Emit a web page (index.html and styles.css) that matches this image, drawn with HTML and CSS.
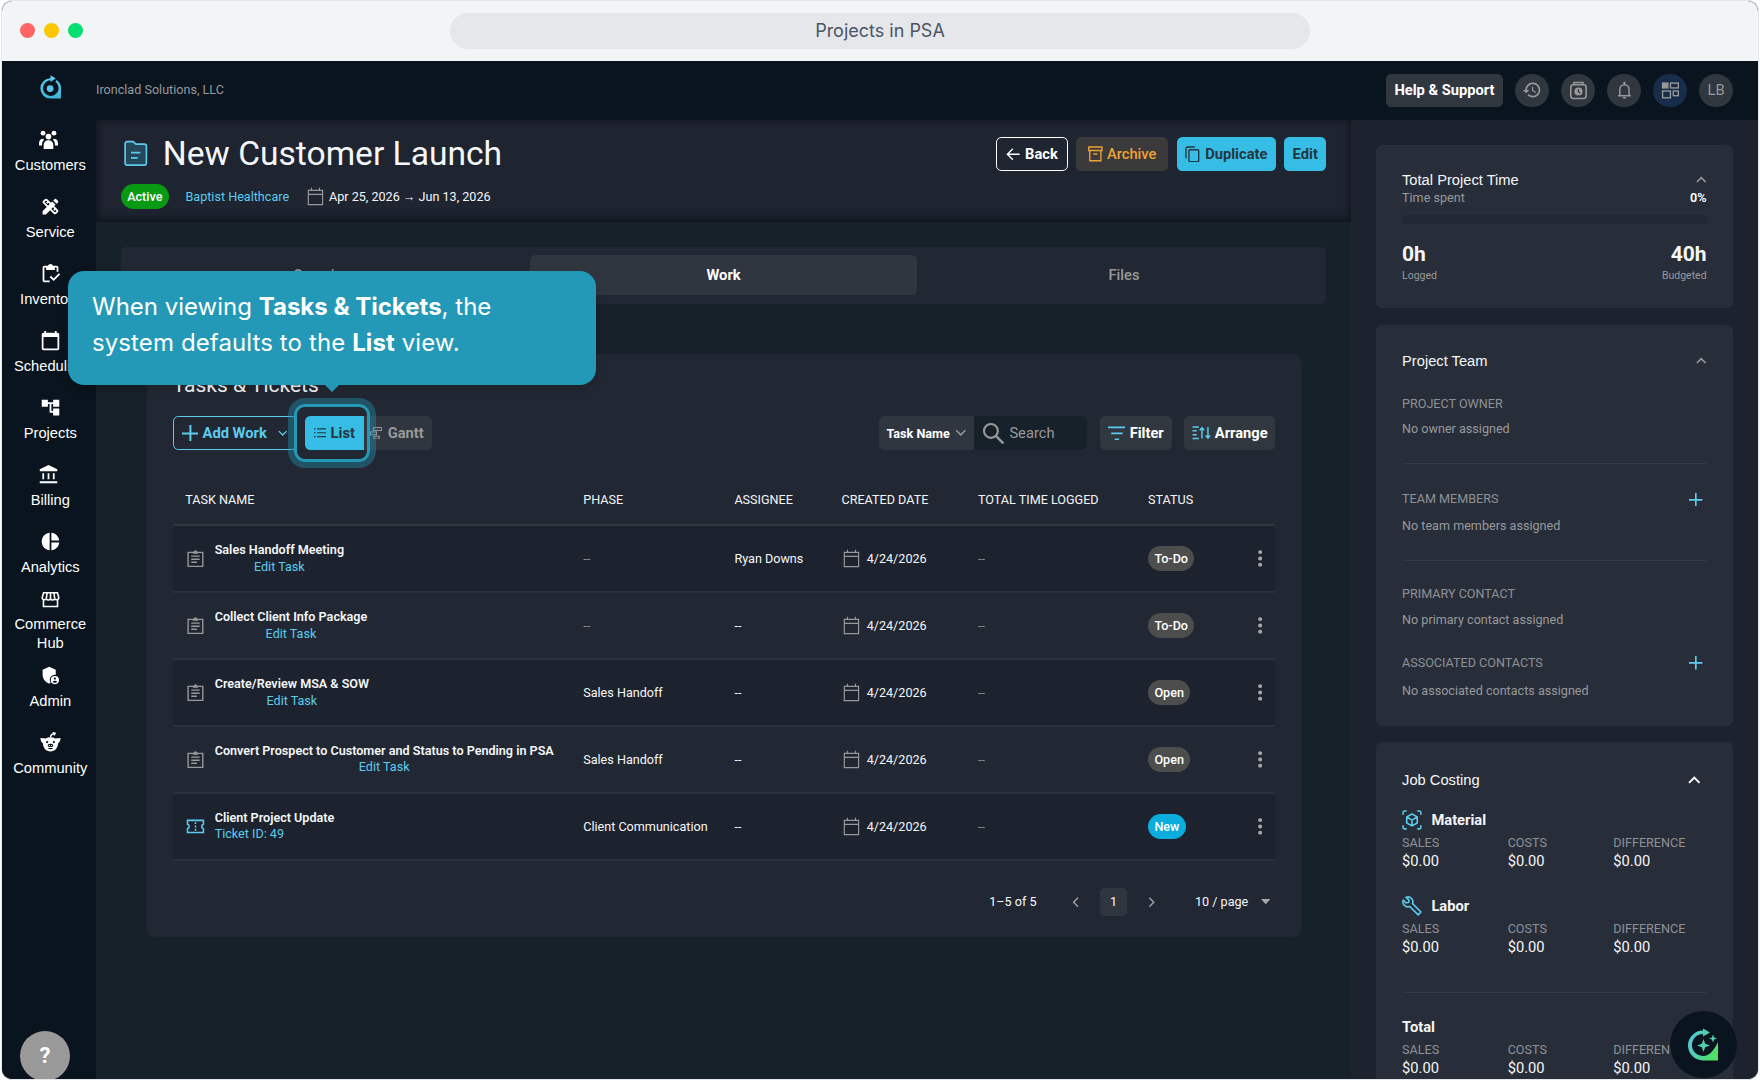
FILE: index.html
```html
<!DOCTYPE html>
<html lang="en">
<head>
  <meta charset="UTF-8">
  <meta name="viewport" content="width=device-width, initial-scale=1.0">
  <title>Projects in PSA</title>
  <link rel="stylesheet" href="styles.css">
</head>
<body>
  <!-- Shared icons -->
  <svg class="sprite" width="0" height="0">
    <symbol id="i-calendar" viewBox="0 0 18 18">
      <path d="M2.2 3.2h13.6v13.6H2.2zM2.2 7h13.6M5.2.6v2.6M12.8.6v2.6" fill="none" stroke="currentColor" stroke-width="1.1"/>
    </symbol>
    <symbol id="i-task" viewBox="0 0 18 18">
      <path d="M2 3.2h14v13.4H2z" fill="none" stroke="currentColor" stroke-width="1.3"/>
      <path d="M6.5 2.6h1a1.5 1.5 0 0 1 3 0h1v2h-5zM5 6.2h8v1.3H5zM5 9.1h8v1.3H5zM5 12h5.4v1.3H5z" fill="currentColor"/>
    </symbol>
    <symbol id="i-ticket" viewBox="0 0 18 18">
      <path d="M1.4 3.2h15.2v3.6a2.3 2.3 0 0 0 0 4.4v3.6H1.4v-3.6a2.3 2.3 0 0 0 0-4.4z" fill="none" stroke="currentColor" stroke-width="1.5"/>
      <path d="M8.3 5h1.5v1.7H8.3zM8.3 8.1h1.5v1.8H8.3zM8.3 11.3h1.5V13H8.3z" fill="currentColor"/>
    </symbol>
    <symbol id="i-dots" viewBox="0 0 4 16">
      <circle cx="2" cy="2" r="1.9"/><circle cx="2" cy="8" r="1.9"/><circle cx="2" cy="14" r="1.9"/>
    </symbol>
    <symbol id="i-up" viewBox="0 0 12 8">
      <path d="M1 6.6l5-5 5 5" fill="none" stroke="currentColor" stroke-width="1.8"/>
    </symbol>
    <symbol id="i-down" viewBox="0 0 12 8">
      <path d="M1 1.4l5 5 5-5" fill="none" stroke="currentColor" stroke-width="1.6"/>
    </symbol>
    <symbol id="i-plus" viewBox="0 0 14 14">
      <path d="M7 0v14M0 7h14" fill="none" stroke="currentColor" stroke-width="1.7"/>
    </symbol>
  </svg>

  <div class="window">
    <div class="titlebar">
      <div class="lights"><i class="red"></i><i class="yellow"></i><i class="green"></i></div>
      <div class="address">Projects in PSA</div>
    </div>

    <div class="app">
      <header class="topbar">
        <div class="logo">
          <svg width="22" height="24" viewBox="0 0 22 24"><defs><linearGradient id="lg" x2="0" y2="1"><stop offset="0" stop-color="#5fd0f2"/><stop offset="1" stop-color="#3fb2d8"/></linearGradient></defs><path d="M11 3.100A9.700 9.700 0 1 0 11 22.500h10V13a9.600 9.600 0 0 0-4.300-8.200l-1.100 1.700A7.400 7.400 0 1 1 11 5.100v1.500l5-3.300L11 .2z" fill="url(#lg)"/><circle cx="10.600" cy="12.900" r="3.200" fill="#55c8ec"/></svg>
        </div>
        <span class="company">Ironclad Solutions, LLC</span>
        <div class="top-actions">
          <button class="btn grey">Help &amp; Support</button>
          <span class="circle"><svg width="19" height="19" viewBox="0 0 24 24" fill="currentColor"><path d="M13 3c-4.970 0-9 4.030-9 9H1l4 4 4-4H6c0-3.870 3.130-7 7-7s7 3.130 7 7-3.130 7-7 7c-1.930 0-3.680-.79-4.940-2.060l-1.420 1.420C8.270 19.990 10.510 21 13 21c4.970 0 9-4.030 9-9s-4.030-9-9-9zm-1 5v5l4.280 2.540.72-1.210-3.500-2.080V8z"/></svg></span>
          <span class="circle"><svg width="18" height="18" viewBox="0 0 18 18" fill="none" stroke="currentColor" stroke-width="1.500"><path d="M4 1.400h10M4.800 1v2.500M13.200 1v2.500"/><rect x="1.700" y="3.600" width="14.600" height="13" rx="2.500"/><circle cx="9" cy="10" r="3.900" fill="currentColor" stroke="none"/><path d="M9 7.800v2.400l1.400 1.200" stroke="#30373f" stroke-width="1.200"/></svg></span>
          <span class="circle"><svg width="18" height="18" viewBox="0 0 18 18" fill="none" stroke="currentColor" stroke-width="1.400"><path d="M2.800 14h12.400M4.600 14V8a4.400 4.400 0 0 1 8.800 0v6"/><path d="M9 .8v2.400" stroke-width="2"/><path d="M7.300 15.300h3.400a1.700 1.700 0 0 1-3.400 0z" fill="currentColor" stroke="none"/></svg></span>
          <span class="circle apps"><svg width="18" height="18" viewBox="0 0 18 18" fill="none" stroke="currentColor" stroke-width="1.300"><rect x="1.500" y="2" width="5" height="4.600" fill="currentColor"/><rect x="9" y="2" width="7.500" height="4.600"/><rect x="1.500" y="9.500" width="7.500" height="6.500"/><rect x="11.700" y="9.500" width="4.800" height="4.500"/></svg></span>
          <span class="circle">LB</span>
        </div>
      </header>

      <div class="body">
        <nav class="sidebar">
          <a class="nav-item"><svg class="shift" width="20" height="20" viewBox="0 0 20 20" fill="currentColor"><circle cx="4.800" cy="4" r="2.300"/><circle cx="15.200" cy="4" r="2.300"/><circle cx="10" cy="7.200" r="2.700"/><path d="M5.400 15.200a4.600 4.600 0 0 1 9.200 0V19H5.400zM5 9.300A4.200 4.200 0 0 0 1 13v2.800h2.800c0-2.400.3-4.200 1.900-5.400zM15 9.300a4.200 4.200 0 0 1 4 3.700v2.800h-2.800c0-2.400-.3-4.200-1.900-5.400z"/></svg>Customers</a>
          <a class="nav-item"><svg width="20" height="20" viewBox="0 0 24 24" fill="currentColor"><path d="M16.240 11.510l1.570-1.570-3.750-3.750-1.570 1.570-4.140-4.130c-.78-.78-2.050-.78-2.830 0l-1.900 1.900c-.78.78-.78 2.050 0 2.830l4.130 4.130L3 17.250V21h3.750l4.760-4.760 4.130 4.130c.95.95 2.230.6 2.830 0l1.900-1.900c.78-.78.78-2.050 0-2.830l-4.130-4.130zM9.180 11.070L5.040 6.940l1.890-1.900 1.270 1.270-1.190 1.190 1.410 1.410 1.190-1.190 1.450 1.450zm7.880 7.890l-4.130-4.130 1.900-1.900 1.450 1.450-1.190 1.190 1.410 1.410 1.190-1.190 1.270 1.270zM20.710 7.040c.39-.39.39-1.020 0-1.410l-2.340-2.340c-.47-.47-1.120-.29-1.410 0l-1.830 1.830 3.750 3.750z"/></svg>Service</a>
          <a class="nav-item"><svg width="20" height="20" viewBox="0 0 24 24" fill="currentColor"><path d="M5 5h2v3h10V5h2v5h2V5c0-1.100-.9-2-2-2h-4.180C14.400 1.840 13.300 1 12 1s-2.400.84-2.820 2H5c-1.100 0-2 .9-2 2v15c0 1.100.9 2 2 2h6v-2H5z"/><path d="M21.500 11.700l-5.900 6-3-3-1.500 1.500 4.500 4.500 7.400-7.500z"/></svg>Inventory</a>
          <a class="nav-item"><svg width="20" height="20" viewBox="0 0 24 24" fill="currentColor"><path d="M20 3h-1V1h-2v2H7V1H5v2H4c-1.100 0-2 .9-2 2v16c0 1.100.9 2 2 2h16c1.100 0 2-.9 2-2V5c0-1.100-.9-2-2-2zm0 18H4V8h16v13z"/></svg>Scheduling</a>
          <a class="nav-item"><svg width="20" height="20" viewBox="0 0 24 24" fill="currentColor"><path d="M22 11V3h-7v3H9V3H2v8h7V8h2v10h4v3h7v-8h-7v3h-2V8h2v3z"/></svg>Projects</a>
          <a class="nav-item"><svg class="shift" width="20" height="20" viewBox="0 0 24 24" fill="currentColor"><path d="M12 1L2 6v2.200h20V6zM5 10.500h2v7H5zM11 10.500h2v7h-2zM17 10.500h2v7h-2zM2 19.700h20V22H2z"/></svg>Billing</a>
          <a class="nav-item"><svg width="20" height="20" viewBox="0 0 24 24" fill="currentColor"><path d="M11 2v20c-5.070-.5-9-4.790-9-10s3.930-9.500 9-10zm2.030 0v8.990H22c-.47-4.740-4.240-8.520-8.970-8.990zm0 11.010V22c4.740-.47 8.500-4.250 8.970-8.990z"/></svg>Analytics</a>
          <a class="nav-item"><svg width="20" height="20" viewBox="0 0 20 20" fill="none" stroke="currentColor" stroke-width="1.500"><path d="M3.400 3.500h13.200l1.400 5a2.200 2.200 0 0 1-4 .8 2.300 2.300 0 0 1-4 0 2.300 2.300 0 0 1-4 0 2.200 2.200 0 0 1-4-.8zM6.800 3.500L6 9M10 3.500V9M13.200 3.500L14 9M3.300 10.500v6.200h13.400v-6.200"/></svg><span>Commerce<br>Hub</span></a>
          <a class="nav-item"><svg width="20" height="20" viewBox="0 0 24 24" fill="currentColor"><path d="M17 11c.34 0 .67.04 1 .09V5.500L10.500 2 3 5.500v5.680c0 4.540 3.200 8.790 7.500 9.820.55-.13 1.080-.32 1.600-.55A6 6 0 0 1 17 11z"/><path d="M17 12.500a4.700 4.700 0 1 0 0 9.400 4.700 4.700 0 0 0 0-9.400zm0 1.700a1.300 1.300 0 1 1 0 2.600 1.300 1.300 0 0 1 0-2.600zm0 6.200c-1 0-1.900-.5-2.400-1.300.1-.8 1.600-1.200 2.400-1.200s2.300.4 2.400 1.200c-.5.8-1.400 1.300-2.400 1.300z"/></svg>Admin</a>
          <a class="nav-item"><svg width="20" height="20" viewBox="0 0 20 20"><path d="M10 5c1.700 0 3.200.4 4.500 1.200L19.500 5.800c.2 2-.6 3.800-2.200 5C17 15.500 14 18.600 10 18.600S3 15.500 2.700 10.800C1.100 9.600.3 7.800.5 5.800l5 .4C6.800 5.400 8.300 5 10 5z" fill="currentColor"/><path d="M10 5c.2-2 1.400-3.400 3.800-3.600M12.300.3l2.200 1-1.300 2" fill="none" stroke="currentColor" stroke-width="1.300"/><g fill="#09141e"><circle cx="6.800" cy="9.600" r="1.100"/><circle cx="13.200" cy="9.600" r="1.100"/><path d="M7.300 12.500a2.800 1.700 0 0 1 5.400 0c0 1.300-1.100 1.700-2.700 1.700s-2.700-.4-2.700-1.700zM7.600 15.300h4.800a2.500 1.600 0 0 1-4.800 0z"/></g><path d="M8.600 12.300h.9v1.100h-.9zM10.600 12.300h.9v1.100h-.9z" fill="currentColor"/></svg>Community</a>
        </nav>

        <main class="main">
          <section class="project-head">
            <div class="head-row">
              <svg width="28" height="28" viewBox="0 0 28 28"><path d="M3.900 4.500a2 2 0 0 1 2-2h5.600l2.700 2.400h8a2 2 0 0 1 2 2v16a2 2 0 0 1-2 2H5.900a2 2 0 0 1-2-2z" fill="#25475a" stroke="#5ccbee" stroke-width="1.600"/><path d="M9.500 13h9M9.500 18h6.400" stroke="#5ccbee" stroke-width="1.600"/></svg>
              <h1>New Customer Launch</h1>
              <div class="head-actions">
                <button class="btn outline"><svg width="13" height="12" viewBox="0 0 13 12"><path d="M6.500.8L1.300 6l5.200 5.200M1.500 6H13" fill="none" stroke="currentColor" stroke-width="1.300"/></svg>Back</button>
                <button class="btn archive"><svg width="14" height="15" viewBox="0 0 14 15" fill="none" stroke="currentColor" stroke-width="1.300"><path d="M.7.900h12.600v3.400H.7zM1.700 4.300v9.800h10.600V4.300M5 7.600h4"/></svg>Archive</button>
                <button class="btn cyan"><svg width="14" height="16" viewBox="0 0 15 17" fill="none" stroke="currentColor" stroke-width="1.400"><path d="M1 12.500V2.300C1 1.500 1.500 1 2.300 1H10"/><rect x="4" y="3.800" width="10" height="12.200" rx="1.200"/></svg>Duplicate</button>
                <button class="btn cyan">Edit</button>
              </div>
            </div>
            <div class="meta-row">
              <span class="badge active">Active</span>
              <a class="link">Baptist Healthcare</a>
              <span class="dates"><svg class="muted" width="18" height="18"><use href="#i-calendar"/></svg>Apr 25, 2026 → Jun 13, 2026</span>
            </div>
          </section>

          <section class="content">
            <div class="tabs">
              <div class="tab">Overview</div>
              <div class="tab selected">Work</div>
              <div class="tab">Files</div>
            </div>

            <div class="work-card">
              <h2>Tasks &amp; Tickets</h2>
              <div class="toolbar">
                <button class="btn add-work"><svg width="16" height="16"><use href="#i-plus"/></svg>Add Work<svg class="caret" width="9" height="6"><use href="#i-down"/></svg></button>
                <div class="view-switch">
                  <button class="btn list"><svg width="12" height="9" viewBox="0 0 12 9"><path d="M0 .8h1.500M0 4.500h1.500M0 8.200h1.500M3 .8h9M3 4.500h9M3 8.200h9" stroke="currentColor" stroke-width="1.100"/></svg>List</button>
                  <button class="btn gantt"><svg width="12" height="12" viewBox="0 0 12 12" fill="none" stroke="currentColor" stroke-width="1"><rect x="3.200" y=".6" width="8" height="2.700"/><rect x=".6" y="4.700" width="5.600" height="2.700"/><rect x="3.800" y="8.800" width="5" height="2.600"/></svg>Gantt</button>
                </div>
                <div class="tools">
                  <div class="search-group">
                    <button class="btn field">Task Name<svg width="11" height="7"><use href="#i-down"/></svg></button>
                    <div class="search"><svg width="22" height="22" viewBox="0 0 22 22" fill="none" stroke="currentColor"><circle cx="8.500" cy="8.500" r="6.600" stroke-width="2"/><path d="M13.400 13.400l7 7" stroke-width="2.300"/></svg>Search</div>
                  </div>
                  <button class="btn grey filter"><svg width="17" height="14" viewBox="0 0 17 14"><path d="M0 1.300h17M3 7h11M6.400 12.700h4.200" stroke="#5ccbee" stroke-width="1.600"/></svg>Filter</button>
                  <button class="btn grey arrange"><svg width="18" height="13" viewBox="0 0 18 13" fill="none" stroke="#5ccbee" stroke-width="1.400"><path d="M.5 1h6M.5 4.600h4M.5 8.300h4M.5 12h6M9.500 12V1.500M7.400 4l2.100-2.500L11.600 4M15.200 1v10.500M13.100 9l2.100 2.500L17.300 9"/></svg>Arrange</button>
                </div>
              </div>

              <table class="tasks">
                <colgroup><col class="c-name"><col class="c-phase"><col class="c-assignee"><col class="c-date"><col class="c-time"><col class="c-status"></colgroup>
                <thead>
                  <tr><th>TASK NAME</th><th>PHASE</th><th>ASSIGNEE</th><th>CREATED DATE</th><th>TOTAL TIME LOGGED</th><th>STATUS</th></tr>
                </thead>
                <tbody>
                  <tr>
                    <td><div class="task"><svg width="18" height="18"><use href="#i-task"/></svg><div><b>Sales Handoff Meeting</b><a class="link">Edit Task</a></div></div></td>
                    <td class="empty">--</td><td>Ryan Downs</td>
                    <td><div class="date"><svg width="18" height="18"><use href="#i-calendar"/></svg>4/24/2026</div></td>
                    <td class="empty">--</td>
                    <td><div class="status"><span class="badge">To-Do</span><svg width="4" height="16"><use href="#i-dots"/></svg></div></td>
                  </tr>
                  <tr>
                    <td><div class="task"><svg width="18" height="18"><use href="#i-task"/></svg><div><b>Collect Client Info Package</b><a class="link">Edit Task</a></div></div></td>
                    <td class="empty">--</td><td>--</td>
                    <td><div class="date"><svg width="18" height="18"><use href="#i-calendar"/></svg>4/24/2026</div></td>
                    <td class="empty">--</td>
                    <td><div class="status"><span class="badge">To-Do</span><svg width="4" height="16"><use href="#i-dots"/></svg></div></td>
                  </tr>
                  <tr>
                    <td><div class="task"><svg width="18" height="18"><use href="#i-task"/></svg><div><b>Create/Review MSA &amp; SOW</b><a class="link">Edit Task</a></div></div></td>
                    <td>Sales Handoff</td><td>--</td>
                    <td><div class="date"><svg width="18" height="18"><use href="#i-calendar"/></svg>4/24/2026</div></td>
                    <td class="empty">--</td>
                    <td><div class="status"><span class="badge">Open</span><svg width="4" height="16"><use href="#i-dots"/></svg></div></td>
                  </tr>
                  <tr>
                    <td><div class="task"><svg width="18" height="18"><use href="#i-task"/></svg><div><b>Convert Prospect to Customer and Status to Pending in PSA</b><a class="link">Edit Task</a></div></div></td>
                    <td>Sales Handoff</td><td>--</td>
                    <td><div class="date"><svg width="18" height="18"><use href="#i-calendar"/></svg>4/24/2026</div></td>
                    <td class="empty">--</td>
                    <td><div class="status"><span class="badge">Open</span><svg width="4" height="16"><use href="#i-dots"/></svg></div></td>
                  </tr>
                  <tr>
                    <td><div class="task ticket"><svg width="18" height="18"><use href="#i-ticket"/></svg><div><b>Client Project Update</b><a class="link">Ticket ID: 49</a></div></div></td>
                    <td>Client Communication</td><td>--</td>
                    <td><div class="date"><svg width="18" height="18"><use href="#i-calendar"/></svg>4/24/2026</div></td>
                    <td class="empty">--</td>
                    <td><div class="status"><span class="badge new">New</span><svg width="4" height="16"><use href="#i-dots"/></svg></div></td>
                  </tr>
                </tbody>
              </table>

              <div class="pagination">
                <span class="range">1–5 of 5</span>
                <svg width="7" height="10" viewBox="0 0 7 10"><path d="M5.700.8L1.500 5l4.200 4.200" fill="none" stroke="currentColor" stroke-width="1.300"/></svg>
                <span class="page">1</span>
                <svg width="7" height="10" viewBox="0 0 7 10"><path d="M1.300.8L5.500 5 1.300 9.200" fill="none" stroke="currentColor" stroke-width="1.300"/></svg>
                <span class="per-page">10 / page<svg width="9" height="5" viewBox="0 0 9 5"><path d="M0 0h9L4.500 5z" fill="currentColor"/></svg></span>
              </div>
            </div>
          </section>
        </main>

        <aside class="side">
          <section class="card time-card">
            <div class="card-title">Total Project Time<svg width="10" height="7"><use href="#i-up"/></svg></div>
            <div class="between spent"><span>Time spent</span><b>0%</b></div>
            <div class="progress"></div>
            <div class="between hours"><b>0h</b><b>40h</b></div>
            <div class="between small"><span>Logged</span><span>Budgeted</span></div>
          </section>

          <section class="card team-card">
            <div class="card-title">Project Team<svg width="10" height="7"><use href="#i-up"/></svg></div>
            <div class="group owner"><div class="label">PROJECT OWNER</div><p>No owner assigned</p></div>
            <hr>
            <div class="group with-add"><div class="label">TEAM MEMBERS<svg width="13" height="13"><use href="#i-plus"/></svg></div><p>No team members assigned</p></div>
            <hr>
            <div class="group primary"><div class="label">PRIMARY CONTACT</div><p>No primary contact assigned</p></div>
            <div class="group with-add last"><div class="label">ASSOCIATED CONTACTS<svg width="13" height="13"><use href="#i-plus"/></svg></div><p>No associated contacts assigned</p></div>
          </section>

          <section class="card cost-card">
            <div class="card-title">Job Costing<svg class="bright" width="12" height="8"><use href="#i-up"/></svg></div>
            <div class="cost">
              <h3><svg width="19" height="19" viewBox="0 0 19 19" fill="none" stroke="#5ccbee" stroke-width="1.500"><path d="M1 4.500V2.500A1.500 1.500 0 0 1 2.500 1h2M14.500 1h2A1.500 1.500 0 0 1 18 2.500v2M18 14.500v2a1.500 1.500 0 0 1-1.500 1.500h-2M4.500 18h-2A1.500 1.500 0 0 1 1 16.500v-2M9.500 3.800l5 2.800v5.800l-5 2.800-5-2.800V6.600zM4.500 6.600l5 3 5-3M9.500 9.600v5.600"/></svg>Material</h3>
              <dl><div><dt>SALES</dt><dd>$0.00</dd></div><div><dt>COSTS</dt><dd>$0.00</dd></div><div><dt>DIFFERENCE</dt><dd>$0.00</dd></div></dl>
            </div>
            <div class="cost">
              <h3><svg width="19" height="19" viewBox="0 0 19 19" fill="none" stroke="#5ccbee" stroke-width="1.500"><path d="M3.800 1.300A4.600 4.600 0 0 1 10 7.200l8 8-2.600 2.700-8.100-8A4.600 4.600 0 0 1 1.200 4l2.700 2.600 2.300-.5.500-2.200z"/></svg>Labor</h3>
              <dl><div><dt>SALES</dt><dd>$0.00</dd></div><div><dt>COSTS</dt><dd>$0.00</dd></div><div><dt>DIFFERENCE</dt><dd>$0.00</dd></div></dl>
            </div>
            <hr>
            <div class="cost total">
              <h3>Total</h3>
              <dl><div><dt>SALES</dt><dd>$0.00</dd></div><div><dt>COSTS</dt><dd>$0.00</dd></div><div><dt>DIFFERENCE</dt><dd>$0.00</dd></div></dl>
            </div>
          </section>
        </aside>
      </div>
    </div>

    <!-- Floating layers -->
    <div class="help-bubble">?</div>
    <div class="assistant">
      <svg width="31" height="33" viewBox="0 0 31 33"><defs><linearGradient id="ag" y2=".5"><stop offset="0" stop-color="#55c5ea"/><stop offset=".55" stop-color="#4fd0a8"/><stop offset="1" stop-color="#4fe06a"/></linearGradient></defs><path d="M15 2.500v-2l7 4-7 4v-2.500a11 11 0 1 0 4.500 21C24.500 24.500 27 20 30 14v18.500H15a15 15 0 0 1 0-30z" fill="url(#ag)"/><path d="M15.500 11l1.700 4.800 4.800 1.700-4.800 1.700-1.700 4.800-1.700-4.800L9 17.500l4.800-1.700zM25 6.500l1.100 2.900 2.900 1.100-2.900 1.100L25 14.500l-1.100-2.900L21 10.500l2.900-1.100z" fill="#4fd0a8"/></svg>
    </div>
    <div class="highlight"></div>
    <div class="tooltip">When viewing <b>Tasks &amp; Tickets</b>, the<br><span>system defaults to the <b>List</b> view.</span></div>
  </div>
</body>
</html>
```
FILE: styles.css
```css
* {
  box-sizing: border-box;
}
body {
  margin: 0;
  background: #fff;
  font-family: Roboto, sans-serif;
  overflow: hidden;
}
svg {
  flex: none;
  display: block;
}
.sprite {
  position: absolute;
}
h1, h2, h3, p, dl, dd {
  margin: 0;
}

/* Browser window */
.window {
  position: relative;
  width: 1758px;
  height: 1080px;
  margin-left: 1px;
  border: 1px solid #e5e7eb;
  border-radius: 11px;
  overflow: hidden;
  background: #09141e;
}
.titlebar {
  display: grid;
  grid-template-columns: 448px 860px 1fr;
  align-items: center;
  height: 60px;
  background: #f3f4f6;
}
.lights {
  display: flex;
  gap: 9px;
  padding: 0 0 1px 18px;
}
.lights i {
  width: 15px;
  height: 15px;
  border-radius: 50%;
}
.red { background: #ff6467; }
.yellow { background: #fdc700; }
.green { background: #05df72; }
.address {
  height: 36px;
  line-height: 36px;
  border-radius: 18px;
  background: #e5e7eb;
  color: #4a5565;
  font-family: Inter, sans-serif;
  font-size: 18px;
  text-align: center;
}

/* App shell */
.app {
  zoom: 1.05;
  display: flex;
  flex-direction: column;
  height: 970px;
  color: #f5f6f7;
  font-size: 12px;
}
.topbar {
  display: flex;
  align-items: center;
  flex: none;
  height: 56px;
  padding-right: 24px;
  background: #09141e;
}
.logo {
  width: 89.5px;
  padding: 0 0 6px 35.5px;
}
.company {
  padding-bottom: 2px;
  color: #97999c;
}
.top-actions {
  display: flex;
  gap: 11.8px;
  margin-left: auto;
}
.circle {
  display: flex;
  align-items: center;
  justify-content: center;
  width: 32px;
  height: 32px;
  border-radius: 50%;
  background: #30373f;
  color: #999;
  font-size: 14px;
}
.circle.apps {
  background: #182c4b;
}
.body {
  display: flex;
  flex: 1;
  min-height: 0;
}

/* Buttons */
.btn {
  display: flex;
  align-items: center;
  justify-content: center;
  height: 32px;
  padding: 0 8px;
  border: 0;
  border-radius: 5px;
  font: bold 14px Roboto, sans-serif;
  white-space: nowrap;
}
.btn.grey {
  background: #30373f;
  color: #fff;
}
.btn.outline {
  gap: 5px;
  width: 68px;
  border: 1px solid #fff;
  background: none;
  color: #fff;
}
.btn.archive {
  gap: 4px;
  width: 88px;
  background: #3a3a3a;
  color: #f0a135;
  font-weight: 500;
}
.btn.cyan {
  gap: 5px;
  background: #35bde5;
  color: #26363f;
}

/* Sidebar */
.sidebar {
  flex: none;
  width: 90px;
  padding-left: 2px;
  background: #09141e;
}
.nav-item {
  display: flex;
  flex-direction: column;
  align-items: center;
  justify-content: center;
  gap: 5px;
  height: 63.8px;
  padding-bottom: 2.4px;
  color: #fff;
  font: 14px/18px "Liberation Sans", sans-serif;
  text-align: center;
}
.nav-item .shift {
  margin-right: 4px;
}

/* Project header */
.main {
  flex: 1;
  min-width: 0;
  background: #17212a;
}
.project-head {
  height: 97px;
  padding: 12.5px 23.2px 0;
  background: #1e2430;
  box-shadow: inset 0 -3px 8px rgba(6, 10, 16, .5), inset 0 0 6px rgba(6, 10, 16, .3);
}
.head-row {
  display: flex;
  align-items: center;
  height: 40px;
}
h1 {
  margin-left: 12px;
  font-size: 32px;
  font-weight: 400;
}
.head-actions {
  display: flex;
  gap: 8px;
  margin-left: auto;
}
.meta-row {
  display: flex;
  align-items: center;
  margin-top: 8.5px;
}
.badge {
  height: 24px;
  padding: 0 6px;
  border-radius: 12px;
  background: #4d4d4d;
  color: #fff;
  font-size: 12px;
  font-weight: 500;
  line-height: 24px;
}
.badge.active {
  background: #089a12;
}
.badge.new {
  background: #0aaddb;
}
.link {
  color: #5ccbee;
}
.meta-row .link {
  margin: 0 16px;
}
.dates {
  display: flex;
  align-items: center;
  gap: 4px;
}
.muted {
  color: #999;
}

/* Work area */
.content {
  padding: 24px 23.2px;
}
.tabs {
  display: grid;
  grid-template-columns: repeat(3, 1fr);
  gap: 12px;
  padding: 8px;
  border-radius: 5px;
  background: #222833;
}
.tab {
  height: 38px;
  border-radius: 5px;
  color: #999;
  font-size: 14px;
  font-weight: 500;
  line-height: 39.5px;
  text-align: center;
}
.tab.selected {
  background: #30363f;
  color: #fff;
  font-weight: bold;
}
.work-card {
  margin: 48px 24.4px 0 25px;
  height: 555px;
  padding: 17.4px 24.4px 0;
  border-radius: 8px;
  background: #222833;
}
h2 {
  font-size: 20px;
  font-weight: 400;
  line-height: 26px;
}
.toolbar {
  display: flex;
  height: 32px;
  margin-top: 16px;
}
.add-work {
  gap: 4px;
  width: 118px;
  border: 1px solid #5ccbee;
  background: none;
  color: #5ccbee;
}
.add-work .caret {
  margin-left: 7px;
}
.view-switch {
  display: flex;
  margin-left: 8px;
}
.list {
  gap: 4px;
  width: 56px;
  border-radius: 5px 0 0 5px;
  background: #35bde5;
  color: #26363f;
}
.gantt {
  gap: 5px;
  width: 65px;
  padding: 0 10px 0 8px;
  border-radius: 0 5px 5px 0;
  background: #30363f;
  color: #999;
}
.tools {
  display: flex;
  gap: 12px;
  margin-left: auto;
}
.search-group {
  display: flex;
}
.field {
  gap: 5px;
  width: 90px;
  border-radius: 5px 0 0 5px;
  background: #30363f;
  color: #fff;
  font-size: 12px;
}
.field svg, .search svg {
  color: #999;
}
.search {
  display: flex;
  align-items: center;
  gap: 4px;
  width: 108px;
  padding-left: 8px;
  border-radius: 0 5px 5px 0;
  background: #17212a;
  color: #999;
  font-size: 14px;
}
.filter {
  gap: 4px;
  width: 68.5px;
}
.arrange {
  gap: 4px;
  width: 86.5px;
}

/* Task table */
.tasks {
  width: 100%;
  margin-top: 23.6px;
  border-spacing: 0;
  table-layout: fixed;
}
.c-name { width: 379px; }
.c-phase { width: 144px; }
.c-assignee { width: 102px; }
.c-date { width: 130px; }
.c-time { width: 162px; }
.tasks th {
  height: 49px;
  padding: 0 12px;
  border-bottom: 2px solid #30373f;
  font-weight: 400;
  text-align: left;
}
.tasks td {
  height: 63.8px;
  padding: 0 12px;
  border-bottom: 2px solid #2b303b;
}
.tasks tbody tr:nth-child(odd) {
  background: #1d232e;
}
.tasks td svg {
  color: #999;
}
.tasks .empty {
  color: #8b8e94;
}
.task {
  display: flex;
  align-items: center;
  gap: 9px;
  padding-left: 1px;
  line-height: 16px;
}
.task b, .task a {
  display: block;
}
.task a {
  text-align: center;
}
.task b, .spent b {
  font-weight: 600;
}
.ticket a {
  text-align: left;
}
.tasks .ticket svg {
  color: #5ccbee;
}
.date {
  display: flex;
  align-items: center;
  gap: 6px;
}
.status {
  display: flex;
  align-items: center;
  justify-content: space-between;
}
.status svg {
  fill: #a8a8a8;
}
.pagination {
  display: flex;
  align-items: center;
  justify-content: flex-end;
  height: 26px;
  margin-top: 26px;
  padding-right: 4.5px;
}
.pagination svg {
  color: #a5a7aa;
}
.range {
  margin-right: 34px;
}
.page {
  width: 26px;
  margin: 0 19.5px;
  border-radius: 4px;
  background: #30363f;
  line-height: 26px;
  text-align: center;
}
.per-page {
  display: flex;
  align-items: center;
  gap: 12px;
  margin-left: 38px;
}

/* Right column */
.side {
  display: flex;
  flex-direction: column;
  flex: none;
  gap: 16px;
  width: 388px;
  padding: 24px;
  background: #1d232e;
  overflow: hidden;
}
.card {
  flex: none;
  padding: 25px;
  border-radius: 6px;
  background: #282e39;
}
.card-title, .label, .between {
  display: flex;
  align-items: center;
  justify-content: space-between;
}
.card-title {
  height: 19px;
  font-family: "Liberation Sans", sans-serif;
  font-size: 14px;
}
.card-title svg {
  color: #999;
}
.card-title .bright {
  margin-right: 6px;
  color: #fff;
}
.time-card {
  height: 155px;
  padding-top: 24px;
}
.spent {
  height: 15px;
  color: #97999c;
}
.spent b {
  color: #fff;
}
.progress {
  height: 8px;
  margin-top: 9px;
  border-radius: 4px;
  background: #222833;
}
.hours {
  margin-top: 17px;
  font-size: 20px;
  line-height: 24px;
}
.small {
  color: #97999c;
  font-size: 10px;
  line-height: 17px;
}
hr {
  height: 1px;
  margin: 0;
  border: 0;
  background: #333943;
}
.group {
  color: #8e9196;
}
.label, .group p {
  height: 16px;
  line-height: 16px;
}
.group p {
  margin-top: 8px;
  color: #97999c;
}
.owner {
  padding: 24px 0;
}
.primary {
  padding: 24px 0 0;
}
.with-add {
  padding: 21.8px 0 24px;
}
.with-add .label {
  height: 24px;
}
.with-add p {
  margin-top: 5.7px;
}
.with-add.last {
  padding: 21.2px 0 0;
}
.with-add.last p {
  margin-top: 6.5px;
}
.with-add svg {
  margin-right: 3.5px;
  color: #5ccbee;
}
.cost-card {
  padding-top: 26.5px;
}
.cost {
  height: 82px;
  padding-top: 18.5px;
}
.cost h3 {
  display: flex;
  align-items: center;
  gap: 9px;
  height: 20px;
  font-size: 14px;
}
.cost dl {
  display: grid;
  grid-template-columns: repeat(3, 100.600px);
  margin-top: 3px;
}
.cost dt {
  color: #8e9196;
  line-height: 17px;
}
.cost dd {
  font-size: 14px;
  line-height: 18px;
}
.cost-card hr {
  margin-top: 28px;
}
.cost.total {
  padding-top: 23px;
}

/* Floating layers */
.help-bubble {
  position: absolute;
  left: 18px;
  top: 1030px;
  width: 50px;
  height: 50px;
  border-radius: 50%;
  background: #999;
  color: #fff;
  font-size: 22px;
  font-weight: bold;
  line-height: 50px;
  text-align: center;
}
.assistant {
  position: absolute;
  left: 1668px;
  top: 1010px;
  display: flex;
  align-items: center;
  justify-content: center;
  width: 67px;
  height: 67px;
  border-radius: 50%;
  background: #09141e;
}
.highlight {
  position: absolute;
  left: 292px;
  top: 403px;
  width: 76px;
  height: 58px;
  border: 3px solid #2399b7;
  border-radius: 11px;
  box-shadow: 0 0 0 6px rgba(35, 153, 183, .38);
}
.tooltip {
  position: absolute;
  left: 66px;
  top: 270px;
  width: 528px;
  height: 114px;
  padding: 18px 24px;
  border-radius: 16px;
  background: #2399b7;
  box-shadow: 0 4px 10px rgba(0, 0, 0, .15);
  color: #fff;
  font: 24px/36px Inter, sans-serif;
}
.tooltip span {
  letter-spacing: .1px;
}
.tooltip::after {
  content: "";
  position: absolute;
  left: 256px;
  top: 113px;
  border: 8px solid transparent;
  border-top-color: #2399b7;
  border-bottom: 0;
}
```
